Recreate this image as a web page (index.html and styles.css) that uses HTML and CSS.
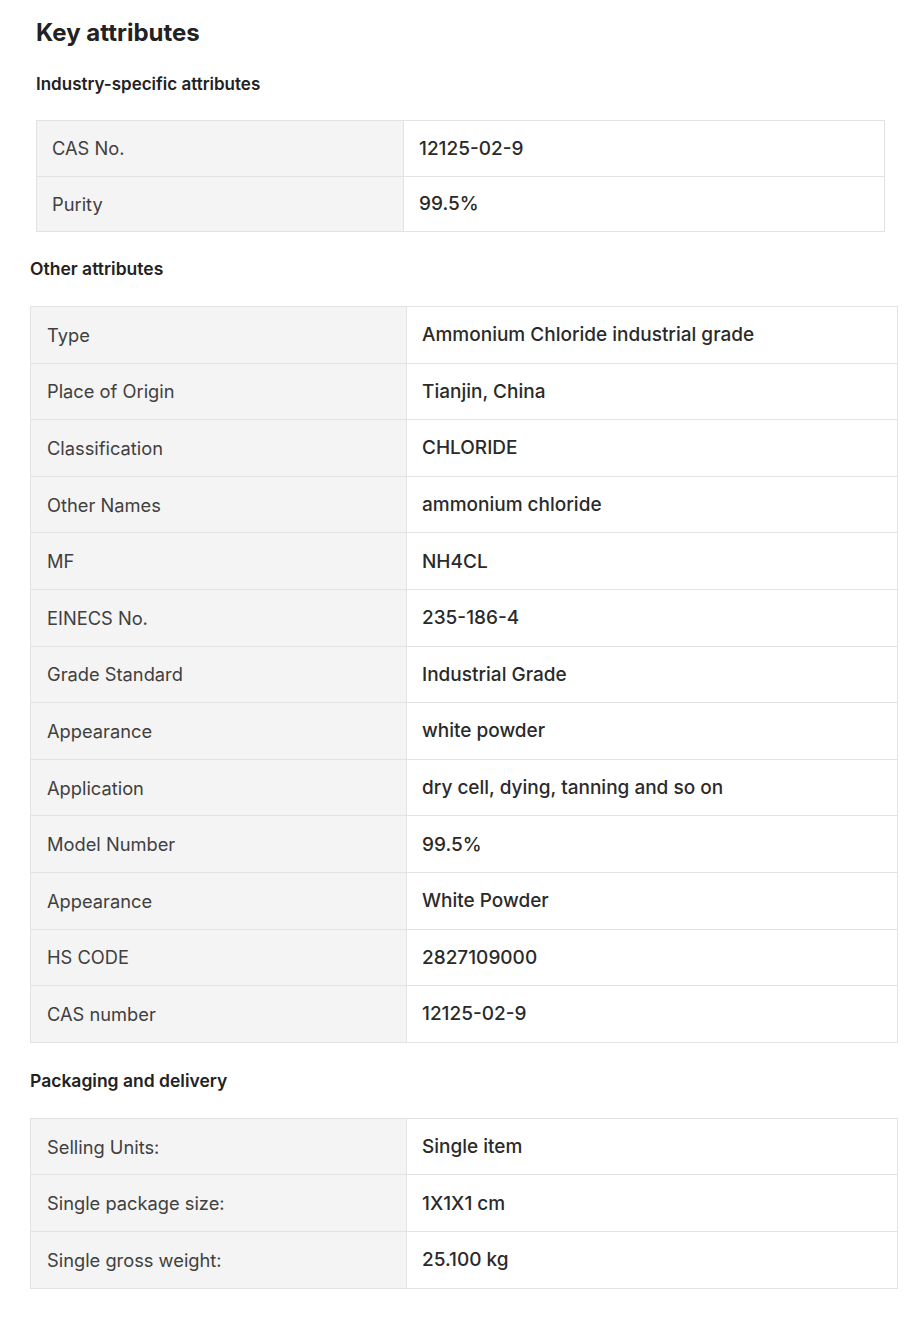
FILE: index.html
```html
<!DOCTYPE html>
<html lang="en">
<head>
<meta charset="utf-8">
<title>Key attributes</title>
<link rel="stylesheet" href="styles.css">
</head>
<body>
<main class="page">
  <h2 class="title">Key attributes</h2>

  <section class="section section-first">
    <h3 class="subtitle">Industry-specific attributes</h3>
    <table class="attrs attrs-first">
      <tr><td class="label">CAS No.</td><td class="value">12125-02-9</td></tr>
      <tr><td class="label">Purity</td><td class="value">99.5%</td></tr>
    </table>
  </section>

  <section class="section">
    <h3 class="subtitle">Other attributes</h3>
    <table class="attrs">
      <tr><td class="label">Type</td><td class="value">Ammonium Chloride industrial grade</td></tr>
      <tr><td class="label">Place of Origin</td><td class="value">Tianjin, China</td></tr>
      <tr><td class="label">Classification</td><td class="value">CHLORIDE</td></tr>
      <tr><td class="label">Other Names</td><td class="value">ammonium chloride</td></tr>
      <tr><td class="label">MF</td><td class="value">NH4CL</td></tr>
      <tr><td class="label">EINECS No.</td><td class="value">235-186-4</td></tr>
      <tr><td class="label">Grade Standard</td><td class="value">Industrial Grade</td></tr>
      <tr><td class="label">Appearance</td><td class="value">white powder</td></tr>
      <tr><td class="label">Application</td><td class="value">dry cell, dying, tanning and so on</td></tr>
      <tr><td class="label">Model Number</td><td class="value">99.5%</td></tr>
      <tr><td class="label">Appearance</td><td class="value">White Powder</td></tr>
      <tr><td class="label">HS CODE</td><td class="value">2827109000</td></tr>
      <tr><td class="label">CAS number</td><td class="value">12125-02-9</td></tr>
    </table>
  </section>

  <section class="section section-last">
    <h3 class="subtitle">Packaging and delivery</h3>
    <table class="attrs">
      <tr><td class="label">Selling Units:</td><td class="value">Single item</td></tr>
      <tr><td class="label">Single package size:</td><td class="value">1X1X1 cm</td></tr>
      <tr><td class="label">Single gross weight:</td><td class="value">25.100 kg</td></tr>
    </table>
  </section>
</main>
</body>
</html>
```

FILE: styles.css
```css
* { box-sizing: border-box; }

body {
  margin: 0;
  background: #ffffff;
  font-family: Inter, "Noto Sans", "Liberation Sans", sans-serif;
  color: #222222;
}

.page {
  padding: 19px 19px 40px 30px;
}

.title {
  margin: 0 0 0 6px;
  font-size: 24px;
  line-height: 28px;
  font-weight: 700;
  color: #222222;
}

.section {
  display: flex;
  flex-direction: column;
}

.section-first {
  padding: 0 13px 0 6px;
}

.subtitle {
  margin: 27px 0 27px 0;
  font-size: 17.5px;
  line-height: 20px;
  font-weight: 600;
  color: #222222;
}

.section-first .subtitle {
  margin-top: 27px;
  margin-bottom: 26px;
  font-size: 17px;
}

.section-last .subtitle {
  margin-top: 28px;
}

.attrs {
  width: 100%;
  border-collapse: collapse;
  border: 1px solid #e3e3e3;
}

.attrs td {
  height: 56.6px;
  border: 1px solid #e3e3e3;
  vertical-align: middle;
}

.attrs .label {
  width: 376px;
  padding: 0 16px 0 16px;
  background: #f4f4f4;
  color: #404040;
  font-size: 18.3px;
  font-weight: 400;
}

.attrs .value {
  padding: 0 15px;
  background: #ffffff;
  color: #2a2a2a;
  font-size: 19px;
  font-weight: 500;
}

.attrs-first td { height: 55.5px; }
.attrs-first .label { width: 367px; padding-left: 15px; }
```
